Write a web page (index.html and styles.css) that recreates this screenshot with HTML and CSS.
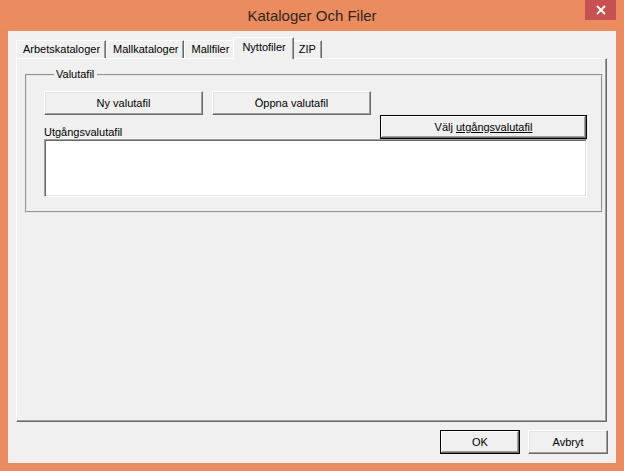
FILE: index.html
```html
<!DOCTYPE html>
<html lang="sv">
<head>
<meta charset="utf-8">
<title>Kataloger Och Filer</title>
<link rel="stylesheet" href="styles.css">
</head>
<body>
<div class="window">
  <div class="titlebar">
    <span></span>
    <span class="title">Kataloger Och Filer</span>
    <span class="close"><svg width="10" height="10" viewBox="0 0 10 10"><path d="M1 1 L9 9 M9 1 L1 9" stroke="#fff" stroke-width="1.8" fill="none"/></svg></span>
  </div>
  <div class="client">
    <div class="tabs">
      <div class="tab">Arbetskataloger</div>
      <div class="tab">Mallkataloger</div>
      <div class="tab">Mallfiler</div>
      <div class="tab active">Nyttofiler</div>
      <div class="tab">ZIP</div>
    </div>
    <div class="panel">
      <fieldset class="group">
        <legend>Valutafil</legend>
        <div class="grid">
          <button class="btn">Ny valutafil</button>
          <button class="btn">Öppna valutafil</button>
          <span class="label">Utgångsvalutafil</span>
          <button class="btn default">Välj <u>utgångsvalutafil</u></button>
          <div class="textbox"></div>
        </div>
      </fieldset>
    </div>
    <div class="footer">
      <button class="btn default small">OK</button>
      <button class="btn small">Avbryt</button>
    </div>
  </div>
</div>
</body>
</html>
```
FILE: styles.css
```css
* { box-sizing: border-box; }
html, body { margin: 0; padding: 0; background: #EA8B60; }
body { font-family: "Liberation Sans", Arial, sans-serif; font-size: 11px; color: #000; }

.window {
  width: 624px;
  height: 471px;
  background: #EA8B60;
  display: flex;
  flex-direction: column;
  padding: 0 8px 8px 8px;
}

.titlebar {
  height: 31px;
  display: grid;
  grid-template-columns: 1fr auto 1fr;
  align-items: start;
}
.title {
  font-size: 15px;
  color: #33261c;
  padding-top: 7px;
}
.close {
  justify-self: end;
  width: 31px;
  height: 20px;
  background: #C75050;
  display: flex;
  align-items: center;
  justify-content: center;
}

.client {
  flex: 1;
  background: #F0F0F0;
  display: flex;
  flex-direction: column;
  padding: 6px 8px 9px 8px;
}

.tabs {
  height: 21px;
  display: flex;
  align-items: flex-end;
}
.tab {
  height: 18px;
  line-height: 16px;
  padding: 0 5px 0 6px;
  border-top: 1px solid #fff;
  border-left: 1px solid #fff;
  border-right: 1px solid #696969;
  box-shadow: inset -1px 0 0 #A0A0A0;
  background: #F0F0F0;
  white-space: nowrap;
}
.tab.active {
  height: 22px;
  line-height: 18px;
  margin: 0 -2px -1px -2px;
  padding: 0 7px 0 8px;
  position: relative;
  z-index: 1;
}

.panel {
  flex: 1;
  margin-right: 1px;
  border-top: 1px solid #fff;
  border-left: 1px solid #fff;
  border-right: 1px solid #696969;
  border-bottom: 1px solid #696969;
  box-shadow: inset -1px -1px 0 #A0A0A0;
  padding: 9px 3px 0 8px;
}

.group {
  margin: 0;
  border: 2px groove #E6E6E6;
  padding: 10px 14px 14px 17px;
}
.group legend {
  padding: 0 3px 0 2px;
  margin-left: 10px;
  line-height: 13px;
}

.grid {
  display: grid;
  grid-template-columns: 159px 159px 207px;
  grid-template-rows: 24px 24px 58px;
  column-gap: 9px;
}
.label {
  grid-column: 1 / 3;
  align-self: end;
  padding-bottom: 1px;
}
.textbox {
  grid-column: 1 / 4;
  background: #fff;
  border-top: 1px solid #A0A0A0;
  border-left: 1px solid #A0A0A0;
  border-right: 1px solid #fff;
  border-bottom: 1px solid #fff;
  box-shadow: inset 1px 1px 0 #696969, inset -1px -1px 0 #E3E3E3;
}

.btn {
  font: inherit;
  color: #000;
  background: #F0F0F0;
  margin: 0;
  padding: 0;
  border-top: 1px solid #fff;
  border-left: 1px solid #fff;
  border-right: 1px solid #696969;
  border-bottom: 1px solid #696969;
  box-shadow: inset -1px -1px 0 #A0A0A0, inset 1px 1px 0 #E3E3E3;
  height: 24px;
  text-align: center;
}
.btn.default {
  border: 1px solid #000;
  box-shadow: inset -1px -1px 0 #696969, inset 1px 1px 0 #fff, inset -2px -2px 0 #A0A0A0;
}
.btn u { text-decoration: underline; }

.footer {
  margin-top: 8px;
  display: flex;
  justify-content: flex-end;
  gap: 8px;
}
.btn.small { width: 80px; }
```
